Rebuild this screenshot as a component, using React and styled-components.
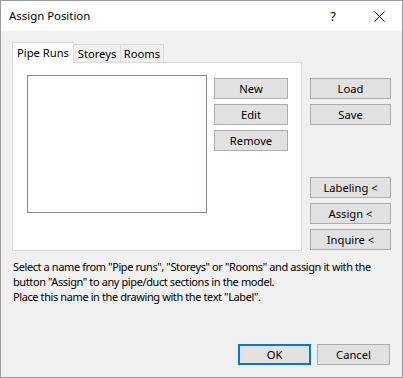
import React from "react";
import styled, { createGlobalStyle } from "styled-components";

const Global = createGlobalStyle`
  html, body { margin: 0; padding: 0; background: #f0f0f0; }
  * { box-sizing: border-box; }
  body { font-family: "Noto Sans", "Open Sans", sans-serif; font-size: 11.2px; color: #000; }
`;

const Window = styled.div`
  width: 403px;
  height: 378px;
  border: 1px solid #9a9a9a;
  background: #f0f0f0;
  display: flex;
  flex-direction: column;
`;

const TitleBar = styled.div`
  height: 30px;
  background: #fff;
  display: flex;
  align-items: center;
  padding-left: 8px;
  flex-shrink: 0;
`;

const Title = styled.div`
  flex: 1;
  font-size: 11.4px;
  padding-bottom: 1px;
`;

const TitleButton = styled.div`
  width: 46px;
  height: 30px;
  display: flex;
  align-items: center;
  justify-content: center;
  font-size: 13px;
`;

const Content = styled.div`
  flex: 1;
  display: flex;
  flex-direction: column;
  padding: 11px 11px 12px 11px;
`;

const MainRow = styled.div`
  display: flex;
  gap: 8px;
  height: 209px;
`;

const TabControl = styled.div`
  width: 290px;
  display: flex;
  flex-direction: column;
`;

const TabStrip = styled.div`
  display: flex;
  align-items: flex-end;
  height: 20px;
  position: relative;
  z-index: 1;
`;

const Tab = styled.div`
  height: ${(p) => (p.$active ? "21px" : "18px")};
  margin-bottom: ${(p) => (p.$active ? "-1px" : "0")};
  width: ${(p) => p.$w}px;
  margin-left: ${(p) => (p.$first ? "0" : "-1px")};
  border: 1px solid #d9d9d9;
  border-bottom: none;
  background: ${(p) => (p.$active ? "#fff" : "#f0f0f0")};
  display: flex;
  align-items: ${(p) => (p.$active ? "flex-start" : "center")};
  justify-content: center;
  padding-top: ${(p) => (p.$active ? "2px" : "0")};
  white-space: nowrap;
  z-index: ${(p) => (p.$active ? 2 : 1)};
`;

const Panel = styled.div`
  flex: 1;
  background: #fff;
  border: 1px solid #d9d9d9;
  display: flex;
  padding: 12px 0 0 14px;
  gap: 7px;
`;

const ListBox = styled.div`
  width: 180px;
  height: 138px;
  border: 1px solid #828790;
  background: #fff;
`;

const ButtonStack = styled.div`
  display: flex;
  flex-direction: column;
  gap: 5px;
  padding-top: ${(p) => p.$top || 0}px;
`;

const Button = styled.button`
  width: ${(p) => p.$w || 75}px;
  height: 21px;
  background: #e1e1e1;
  border: ${(p) => (p.$default ? "2px solid #0078d7" : "1px solid #adadad")};
  font-family: inherit;
  font-size: 11.2px;
  color: #000;
  padding: 0;
  display: flex;
  align-items: center;
  justify-content: center;
  line-height: 1;
`;

const RightColumn = styled.div`
  display: flex;
  flex-direction: column;
  justify-content: space-between;
  padding: 36px 0 1px 0;
`;

const HelpText = styled.p`
  margin: 8px 0 0 1px;
  line-height: 15px;
  font-size: 11px;
  letter-spacing: -0.4px;
  white-space: nowrap;
`;

const Footer = styled.div`
  margin-top: auto;
  display: flex;
  justify-content: flex-end;
  gap: 6px;
  padding-right: 1px;
`;

export default function App() {
  return (
    <>
      <Global />
      <Window>
        <TitleBar>
          <Title>Assign Position</Title>
          <TitleButton>?</TitleButton>
          <TitleButton>
            <svg width="11" height="11" viewBox="0 0 11 11">
              <path d="M0.5 0.5 L10.5 10.5 M10.5 0.5 L0.5 10.5" stroke="#000" strokeWidth="1" fill="none" />
            </svg>
          </TitleButton>
        </TitleBar>
        <Content>
          <MainRow>
            <TabControl>
              <TabStrip>
                <Tab $active $first $w={62}>Pipe Runs</Tab>
                <Tab $w={48}>Storeys</Tab>
                <Tab $w={44}>Rooms</Tab>
              </TabStrip>
              <Panel>
                <ListBox />
                <ButtonStack $top={3}>
                  <Button $w={74}>New</Button>
                  <Button $w={74}>Edit</Button>
                  <Button $w={74}>Remove</Button>
                </ButtonStack>
              </Panel>
            </TabControl>
            <RightColumn>
              <ButtonStack>
                <Button $w={81}>Load</Button>
                <Button $w={81}>Save</Button>
              </ButtonStack>
              <ButtonStack>
                <Button $w={81}>Labeling &lt;</Button>
                <Button $w={81}>Assign &lt;</Button>
                <Button $w={81}>Inquire &lt;</Button>
              </ButtonStack>
            </RightColumn>
          </MainRow>
          <HelpText>
            Select a name from "Pipe runs", "Storeys" or "Rooms" and assign it with the
            <br />
            button "Assign" to any pipe/duct sections in the model.
            <br />
            Place this name in the drawing with the text "Label".
          </HelpText>
          <Footer>
            <Button $default $w={73}>OK</Button>
            <Button $w={73}>Cancel</Button>
          </Footer>
        </Content>
      </Window>
    </>
  );
}
